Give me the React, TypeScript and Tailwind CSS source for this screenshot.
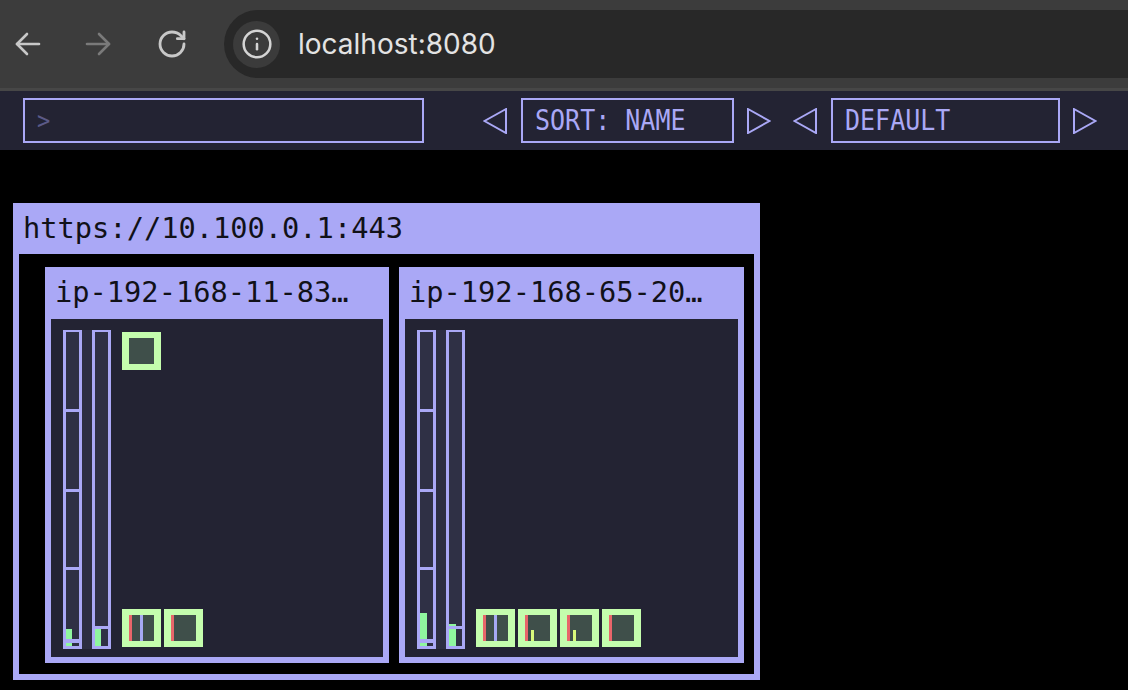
import { Info, RotateCw } from "lucide-react";

type Mark = { top: number; h: number };
type PodInfo = { red?: boolean; line?: boolean; spike?: boolean };

function Arrow({ dir, color }: { dir: "left" | "right"; color: string }) {
  return (
    <svg width="26" height="24" viewBox="0 0 26 24" fill="none" stroke={color} strokeWidth="2.6" strokeLinecap="round" strokeLinejoin="round">
      {dir === "left" ? (
        <>
          <path d="M24 12H2" />
          <path d="M12 2L2 12l10 10" />
        </>
      ) : (
        <>
          <path d="M2 12h22" />
          <path d="M14 2l10 10-10 10" />
        </>
      )}
    </svg>
  );
}

function Tri({ dir }: { dir: "left" | "right" }) {
  return (
    <svg width="24" height="26" viewBox="0 0 24 26" fill="none" stroke="#aaa8f6" strokeWidth="2">
      {dir === "left" ? <polygon points="23,1 1.5,13 23,25" /> : <polygon points="1,1 22.5,13 1,25" />}
    </svg>
  );
}

function BrowserChrome() {
  return (
    <div className="h-[91px] shrink-0 bg-[#3c3c3c] border-b-[3px] border-[#474747] flex items-center">
      <div className="ml-[15px]">
        <Arrow dir="left" color="#c8c8c8" />
      </div>
      <div className="ml-[44px]">
        <Arrow dir="right" color="#7a7a7a" />
      </div>
      <div className="ml-[45px] text-[#c8c8c8]">
        <RotateCw size={32} strokeWidth={2.1} />
      </div>
      <div className="ml-[36px] flex-1 h-[68px] rounded-l-full bg-[#282828] flex items-center">
        <div className="ml-[9px] w-[47px] h-[47px] rounded-full bg-[#3b3b3b] flex items-center justify-center text-[#d4d4d4]">
          <Info size={32} strokeWidth={1.9} />
        </div>
        <span className="ml-[18px] text-[28px] text-[#e3e3e3] font-['Inter',sans-serif]">localhost:8080</span>
      </div>
    </div>
  );
}

function Toolbar() {
  return (
    <div className="h-[59px] shrink-0 bg-[#232333] flex items-center font-['DejaVu_Sans_Mono',monospace]">
      <div className="ml-[23px] w-[401px] h-[45px] border-2 border-[#aaa8f6] flex items-center pl-[12px] text-[22px] text-[#5b5a88]">
        <span className="inline-block scale-y-[1.12]">&gt;</span>
      </div>
      <div className="ml-[59px]">
        <Tri dir="left" />
      </div>
      <div className="ml-[14px] w-[213px] h-[45px] border-2 border-[#aaa8f6] flex items-center pl-[12px] text-[25px] text-[#aaa8f6]">
        <span className="inline-block scale-y-[1.12]">SORT: NAME</span>
      </div>
      <div className="ml-[13px]">
        <Tri dir="right" />
      </div>
      <div className="ml-[22px]">
        <Tri dir="left" />
      </div>
      <div className="ml-[14px] w-[229px] h-[45px] border-2 border-[#aaa8f6] flex items-center pl-[12px] text-[25px] text-[#aaa8f6]">
        <span className="inline-block scale-y-[1.12]">DEFAULT</span>
      </div>
      <div className="ml-[13px]">
        <Tri dir="right" />
      </div>
    </div>
  );
}

function Gauge({ fill, fillW, marks }: { fill: number; fillW: number; marks: Mark[] }) {
  return (
    <div className="relative w-[19px] h-full border-x-[3px] border-t-2 border-b-[3px] border-[#aaa8f6] bg-[#2f3045]">
      <div className="absolute left-0 bottom-0 bg-[#8ff79f]" style={{ height: fill, width: fillW }} />
      {marks.map((m, i) => (
        <div key={i} className="absolute left-0 right-0 bg-[#aaa8f6]" style={{ top: m.top, height: m.h }} />
      ))}
    </div>
  );
}

function Pod({ red, line, spike }: PodInfo) {
  return (
    <div className="w-[39px] h-[38px] border-x-[7px] border-y-[6px] border-[#c4fdad] bg-[#3f4f4a] flex items-end">
      {red && <div className="w-[3px] h-full bg-[#e8666a]" />}
      {spike && <div className="ml-[3px] w-[3px] h-[11px] bg-[#d9f97b]" />}
      {line && <div className="ml-[8px] w-[3px] h-full bg-[#a7a9f4]" />}
    </div>
  );
}

const cpuMarks: Mark[] = [
  { top: 77, h: 3 },
  { top: 157, h: 3 },
  { top: 235, h: 3 },
  { top: 307, h: 4 },
];
const memMarks: Mark[] = [{ top: 294, h: 3 }];

type NodeInfo = {
  name: string;
  width: number;
  cpu: number;
  mem: number;
  fillW: number;
  top: PodInfo[];
  bottom: PodInfo[];
};

const nodes: NodeInfo[] = [
  {
    name: "ip-192-168-11-83…",
    width: 344,
    cpu: 17,
    mem: 17,
    fillW: 6,
    top: [{}],
    bottom: [{ red: true, line: true }, { red: true }],
  },
  {
    name: "ip-192-168-65-20…",
    width: 345,
    cpu: 33,
    mem: 22,
    fillW: 7,
    top: [],
    bottom: [{ red: true, line: true }, { red: true, spike: true }, { red: true, spike: true }, { red: true }],
  },
];

function NodeCard({ node }: { node: NodeInfo }) {
  return (
    <div className="h-[396px] bg-[#aaa8f6] flex flex-col" style={{ width: node.width }}>
      <div className="h-[52px] shrink-0 flex items-center pl-[10px] text-[28.7px] text-[#111118] whitespace-nowrap overflow-hidden">
        {node.name}
      </div>
      <div className="flex-1 mx-[6px] mb-[6px] bg-[#232333] flex pl-[12px] pt-[11px] pb-[8px]">
        <div className="flex gap-[10px] bg-[#2d2e42]">
          <Gauge fill={node.cpu} fillW={node.fillW} marks={cpuMarks} />
          <Gauge fill={node.mem} fillW={node.fillW} marks={memMarks} />
        </div>
        <div className="ml-[11px] py-[2px] flex flex-col justify-between">
          <div className="flex gap-[3px]">
            {node.top.map((p, i) => (
              <Pod key={i} {...p} />
            ))}
          </div>
          <div className="flex gap-[3px]">
            {node.bottom.map((p, i) => (
              <Pod key={i} {...p} />
            ))}
          </div>
        </div>
      </div>
    </div>
  );
}

export default function App() {
  return (
    <div className="w-[1128px] h-[690px] bg-black overflow-hidden flex flex-col">
      <BrowserChrome />
      <Toolbar />
      <div className="pl-[13px] pt-[53px] font-['DejaVu_Sans_Mono',monospace]">
        <div className="w-[747px] h-[477px] bg-[#aaa8f6] flex flex-col">
          <div className="h-[51px] shrink-0 flex items-center pl-[10px] text-[28.7px] text-[#111118]">
            https://10.100.0.1:443
          </div>
          <div className="flex-1 mx-[6px] mb-[6px] bg-black flex gap-[10px] pl-[26px] pt-[13px]">
            {nodes.map((n) => (
              <NodeCard key={n.name} node={n} />
            ))}
          </div>
        </div>
      </div>
    </div>
  );
}
